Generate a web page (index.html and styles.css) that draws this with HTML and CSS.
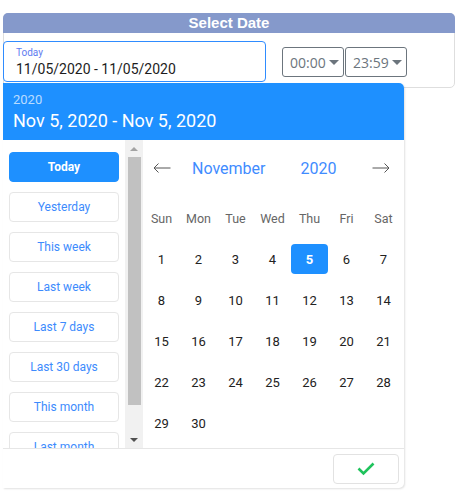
FILE: index.html
```html
<!DOCTYPE html>
<html>
<head>
<meta charset="utf-8">
<link rel="stylesheet" href="styles.css">
</head>
<body>
<div class="picker">
  <div class="card">
    <div class="card-title">Select Date</div>
    <div class="card-body">
      <div class="range-input">
        <span class="range-label">Today</span>
        <span class="range-value">11/05/2020 - 11/05/2020</span>
      </div>
      <div class="times">
        <button class="time">00:00<span class="caret"></span></button>
        <button class="time">23:59<span class="caret"></span></button>
      </div>
    </div>
  </div>

  <div class="popup">
    <div class="banner">
      <div class="banner-year">2020</div>
      <div class="banner-range">Nov 5, 2020 - Nov 5, 2020</div>
    </div>
    <div class="popup-body">
      <div class="presets">
        <button class="preset active">Today</button>
        <button class="preset">Yesterday</button>
        <button class="preset">This week</button>
        <button class="preset">Last week</button>
        <button class="preset">Last 7 days</button>
        <button class="preset">Last 30 days</button>
        <button class="preset">This month</button>
        <button class="preset">Last month</button>
      </div>
      <div class="scrollbar">
        <div class="sb-btn"><span class="sb-up"></span></div>
        <div class="sb-thumb"></div>
        <div class="sb-rest"></div>
        <div class="sb-btn"><span class="sb-down"></span></div>
      </div>
      <div class="calendar">
        <div class="cal-nav">
          <span class="nav-arrow">
            <svg width="18" height="10" viewBox="0 0 18 10"><path d="M17.5 5H1M5.5 0.5L1 5L5.5 9.5" fill="none" stroke="#555" stroke-width="1"/></svg>
          </span>
          <span class="cal-month">November</span>
          <span class="cal-year">2020</span>
          <span class="nav-arrow right">
            <svg width="18" height="10" viewBox="0 0 18 10"><path d="M0.5 5H17M12.5 0.5L17 5L12.5 9.5" fill="none" stroke="#555" stroke-width="1"/></svg>
          </span>
        </div>
        <div class="cal-grid">
          <span class="wd">Sun</span><span class="wd">Mon</span><span class="wd">Tue</span><span class="wd">Wed</span><span class="wd">Thu</span><span class="wd">Fri</span><span class="wd">Sat</span>
          <span class="day">1</span><span class="day">2</span><span class="day">3</span><span class="day">4</span><span class="day selected">5</span><span class="day">6</span><span class="day">7</span>
          <span class="day">8</span><span class="day">9</span><span class="day">10</span><span class="day">11</span><span class="day">12</span><span class="day">13</span><span class="day">14</span>
          <span class="day">15</span><span class="day">16</span><span class="day">17</span><span class="day">18</span><span class="day">19</span><span class="day">20</span><span class="day">21</span>
          <span class="day">22</span><span class="day">23</span><span class="day">24</span><span class="day">25</span><span class="day">26</span><span class="day">27</span><span class="day">28</span>
          <span class="day">29</span><span class="day">30</span>
        </div>
      </div>
    </div>
    <div class="popup-footer">
      <button class="ok">
        <svg width="18" height="14" viewBox="0 0 18 14"><path d="M1.5 6.5L6.5 11.5L16.5 1.5" fill="none" stroke="#1fc35c" stroke-width="2.6"/></svg>
      </button>
    </div>
  </div>
</div>
</body>
</html>
```

FILE: styles.css
```css
* { box-sizing: border-box; }

html, body {
  margin: 0;
  padding: 0;
  background: #fff;
}

body {
  font-family: Roboto, "Liberation Sans", sans-serif;
  width: 456px;
  height: 498px;
  overflow: hidden;
}

button {
  font-family: inherit;
  cursor: pointer;
}

.picker {
  position: relative;
  padding: 13px 0 0 3px;
}

/* ---------- top card ---------- */
.card {
  width: 452px;
  height: 75px;
  border: 1px solid #dedede;
  border-radius: 5px;
}

.card-title {
  margin: -1px -1px 0 -1px;
  height: 20px;
  background: #8599cb;
  border-radius: 5px 5px 0 0;
  color: #fff;
  font-family: "Liberation Sans", Arial, sans-serif;
  font-weight: bold;
  font-size: 15px;
  line-height: 20px;
  text-align: center;
}

.card-body {
  display: flex;
  align-items: center;
  padding-top: 8px;
}

.range-input {
  margin-left: -1px;
  width: 263px;
  height: 41px;
  border: 1px solid #2f8cff;
  border-radius: 4px;
  padding: 5px 0 0 12px;
  display: flex;
  flex-direction: column;
}

.range-label {
  font-size: 10px;
  line-height: 12px;
  color: #5f7cf0;
}

.range-value {
  font-size: 14px;
  line-height: 18px;
  color: #1d1d1d;
  margin-top: 1px;
}

.times {
  display: flex;
  gap: 1px;
  margin-left: 16px;
  margin-top: 1px;
}

.time {
  width: 62px;
  height: 30px;
  border: 1px solid #6c757d;
  border-radius: 3px;
  background: #fff;
  color: #6c757d;
  font-family: "Open Sans", "Noto Sans", sans-serif;
  font-size: 14px;
  padding: 0 0 0 7px;
  display: flex;
  align-items: center;
}

.caret {
  display: inline-block;
  margin-left: 3px;
  width: 0;
  height: 0;
  border-left: 5px solid transparent;
  border-right: 5px solid transparent;
  border-top: 5px solid #6c757d;
}

/* ---------- popup ---------- */
.popup {
  position: absolute;
  left: 3px;
  top: 83px;
  width: 401px;
  background: #fff;
  box-shadow: 1px 1px 2px rgba(0, 0, 0, 0.12);
  border-radius: 0 5px 5px 0;
}

.banner {
  height: 57px;
  background: #1e90ff;
  color: #fff;
  border-radius: 0 5px 0 0;
  padding: 9px 0 0 10px;
}

.banner-year {
  font-size: 13px;
  line-height: 16px;
  color: rgba(255, 255, 255, 0.7);
}

.banner-range {
  margin-top: 1px;
  font-size: 18px;
  line-height: 24px;
}

.popup-body {
  display: flex;
  height: 308px;
}

.presets {
  width: 122px;
  overflow: hidden;
  padding: 12px 6px 0 6px;
  display: flex;
  flex-direction: column;
  gap: 10px;
  flex-shrink: 0;
}

.preset {
  flex-shrink: 0;
  width: 110px;
  height: 30px;
  border: 1px solid #e6e6e6;
  border-radius: 4px;
  background: #fff;
  color: #3d8bfd;
  font-size: 12px;
  padding: 0;
}

.preset.active {
  background: #1e90ff;
  border-color: #1e90ff;
  color: #fff;
  font-weight: bold;
}

.scrollbar {
  width: 18px;
  flex-shrink: 0;
  background: #f1f1f1;
  display: flex;
  flex-direction: column;
  align-items: center;
}

.sb-btn {
  height: 17px;
  width: 100%;
  display: flex;
  align-items: center;
  justify-content: center;
}

.sb-up {
  width: 0;
  height: 0;
  border-left: 4px solid transparent;
  border-right: 4px solid transparent;
  border-bottom: 4px solid #a3a3a3;
}

.sb-down {
  width: 0;
  height: 0;
  border-left: 4px solid transparent;
  border-right: 4px solid transparent;
  border-top: 4px solid #505050;
}

.sb-thumb {
  width: 13px;
  height: 248px;
  background: #c1c1c1;
}

.sb-rest {
  flex: 1;
}

/* ---------- calendar ---------- */
.calendar {
  width: 261px;
  padding-top: 8px;
}

.cal-nav {
  height: 40px;
  display: flex;
  align-items: center;
}

.nav-arrow {
  width: 37px;
  display: flex;
  justify-content: center;
}

.nav-arrow.right {
  margin-left: auto;
  margin-right: 5px;
}

.cal-month {
  margin-left: 12px;
  font-size: 16px;
  color: #3f8cff;
}

.cal-year {
  margin-left: 35px;
  font-size: 16px;
  color: #3f8cff;
}

.cal-grid {
  margin-top: 15px;
  display: grid;
  grid-template-columns: repeat(7, 37px);
  grid-auto-rows: 30px;
  row-gap: 11px;
}

.wd, .day {
  display: flex;
  align-items: center;
  justify-content: center;
}

.wd {
  font-size: 12.5px;
  color: #666;
}

.day {
  font-size: 13px;
  color: #222;
}

.day.selected {
  background: #1e90ff;
  color: #fff;
  font-weight: bold;
  border-radius: 4px;
}

.popup-footer {
  height: 40px;
  border-top: 1px solid #e6e6e6;
  display: flex;
  justify-content: flex-end;
  align-items: center;
  padding-right: 5px;
}

.ok {
  width: 66px;
  height: 30px;
  border: 1px solid #e2e2e2;
  border-radius: 4px;
  background: #fff;
  display: flex;
  align-items: center;
  justify-content: center;
  padding: 0;
}
```
